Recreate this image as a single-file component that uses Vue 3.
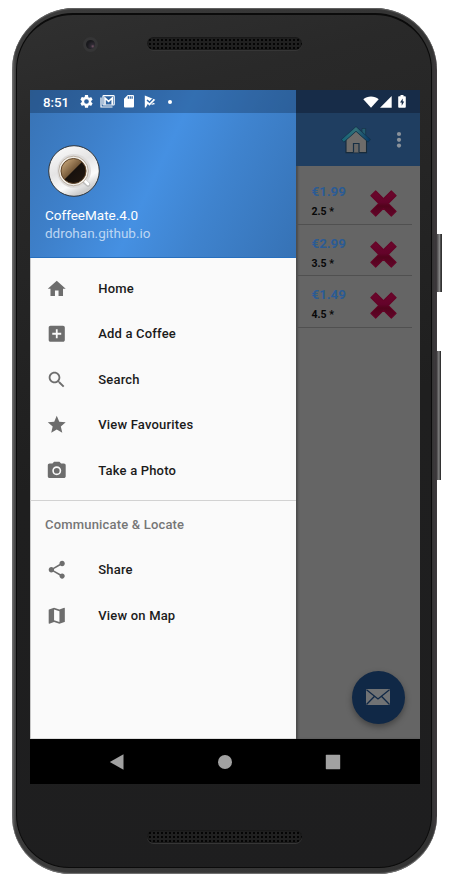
<script setup>
const mainItems = [
  { label: 'Home', path: 'M10 20v-6h4v6h5v-8h3L12 3 2 12h3v8z' },
  { label: 'Add a Coffee', path: 'M19 3H5c-1.11 0-2 .9-2 2v14c0 1.1.89 2 2 2h14c1.1 0 2-.9 2-2V5c0-1.1-.9-2-2-2zm-2 10h-4v4h-2v-4H7v-2h4V7h2v4h4v2z' },
  { label: 'Search', path: 'M15.5 14h-.79l-.28-.27C15.41 12.59 16 11.11 16 9.5 16 5.91 13.09 3 9.5 3S3 5.91 3 9.5 5.91 16 9.5 16c1.61 0 3.09-.59 4.23-1.57l.27.28v.79l5 4.99L20.49 19l-4.99-5zm-6 0C7.01 14 5 11.99 5 9.5S7.01 5 9.5 5 14 7.01 14 9.5 11.99 14 9.5 14z' },
  { label: 'View Favourites', path: 'M12 17.27L18.18 21l-1.64-7.03L22 9.24l-7.19-.61L12 2 9.19 8.63 2 9.24l5.46 4.73L5.82 21z' },
  { label: 'Take a Photo', path: 'M9 2L7.17 4H4c-1.1 0-2 .9-2 2v12c0 1.1.9 2 2 2h16c1.1 0 2-.9 2-2V6c0-1.1-.9-2-2-2h-3.17L15 2H9zm3 15c-2.76 0-5-2.24-5-5s2.24-5 5-5 5 2.24 5 5-2.24 5-5 5zM12 8.8a3.2 3.2 0 1 0 0 6.4 3.2 3.2 0 0 0 0-6.4z' },
]
const shareItems = [
  { label: 'Share', path: 'M18 16.08c-.76 0-1.44.3-1.96.77L8.91 12.7c.05-.23.09-.46.09-.7s-.04-.47-.09-.7l7.05-4.11c.54.5 1.25.81 2.04.81 1.66 0 3-1.34 3-3s-1.34-3-3-3-3 1.34-3 3c0 .24.04.47.09.7L8.04 9.81C7.5 9.31 6.79 9 6 9c-1.66 0-3 1.34-3 3s1.34 3 3 3c.79 0 1.5-.31 2.04-.81l7.12 4.16c-.05.21-.08.43-.08.65 0 1.61 1.31 2.92 2.92 2.92s2.92-1.31 2.92-2.92-1.31-2.92-2.92-2.92z' },
  { label: 'View on Map', path: 'M20.5 3l-.16.03L15 5.1 9 3 3.36 4.9c-.21.07-.36.25-.36.48V20.5c0 .28.22.5.5.5l.16-.03L9 18.9l6 2.1 5.64-1.9c.21-.07.36-.25.36-.48V3.5c0-.28-.22-.5-.5-.5zM15 19l-6-2.11V5l6 2.11V19z' },
]
const coffees = [
  { price: '€1.99', rating: '2.5 *' },
  { price: '€2.99', rating: '3.5 *' },
  { price: '€1.49', rating: '4.5 *' },
]
</script>

<template>
  <div class="stage">
    <div class="phone">
      <i class="key power"></i>
      <i class="key volume"></i>
      <div class="face">
        <div class="bezel top">
          <i class="camera"></i>
          <i class="speaker"></i>
        </div>

        <div class="screen">
          <div class="content">
            <aside class="drawer">
              <header class="profile">
                <div class="status">
                  <span class="time">8:51</span>
                  <svg class="s-gear" viewBox="2 2 20 20"><path d="M19.14 12.94a7 7 0 0 0 0-1.88l2.03-1.58a.5.5 0 0 0 .12-.61l-1.92-3.32a.5.5 0 0 0-.59-.22l-2.39.96a7 7 0 0 0-1.62-.94l-.36-2.54A.5.5 0 0 0 13.93 2h-3.86a.5.5 0 0 0-.47.41l-.36 2.54a7 7 0 0 0-1.62.94l-2.4-.96a.5.5 0 0 0-.58.22L2.74 8.87a.5.5 0 0 0 .12.61l2.03 1.58a7 7 0 0 0 0 1.88l-2.03 1.58a.5.5 0 0 0-.12.61l1.92 3.32c.12.22.37.29.59.22l2.39-.96a7 7 0 0 0 1.62.94l.36 2.54c.05.24.24.41.48.41h3.84c.24 0 .44-.17.47-.41l.36-2.54a7 7 0 0 0 1.62-.94l2.39.96c.22.08.47 0 .59-.22l1.92-3.32a.5.5 0 0 0-.12-.61zM12 15.6a3.6 3.6 0 1 1 0-7.2 3.6 3.6 0 0 1 0 7.2z" /></svg>
                  <svg class="s-mail" viewBox="0 0 15 13"><path d="M1 2.5V12h11.5" fill="none" stroke="#fff" stroke-width="1.2" /><rect x="3" y=".7" width="11.2" height="9.3" rx=".8" fill="none" stroke="#fff" stroke-width="1.2" /><path d="M5 9.8V3l3.6 3.3L12.2 3v6.8" fill="none" stroke="#fff" stroke-width="1.6" /></svg>
                  <svg class="s-sd" viewBox="4 2 16 20"><path d="M18 2h-8L4 8v12c0 1.1.9 2 2 2h12c1.1 0 2-.9 2-2V4c0-1.100-.9-2-2-2zm-6 6h-2V4h2v4zm3 0h-2V4h2v4zm3 0h-2V4h2v4z" /></svg>
                  <svg class="s-play" viewBox="0 0 12 13"><path d="M.8.4 11.300 4.800 5.400 10.700 3.200 8.200 4.300 7.100 5.500 8.300 9.200 4.500 8.200 3.600 5.500 6.300 3.500 4.500 2.500 5.600 4.600 7.500 1.800 12.500.8 12.400z" /><path d="M7 10l2.200-2.200L11.300 9z" /></svg>
                  <i class="s-dot"></i>
                </div>
                <svg class="avatar" viewBox="0 0 52 52">
                  <defs>
                    <linearGradient id="plate" x1="0" y1="0" x2=".5" y2="1"><stop offset="0" stop-color="#fff" /><stop offset=".5" stop-color="#e5e4e4" /><stop offset=".8" stop-color="#fbfbfb" /><stop offset="1" stop-color="#ccc" /></linearGradient>
                    <linearGradient id="coffee" x1=".1" y1=".1" x2=".9" y2=".9"><stop offset="0" stop-color="#c6a579" /><stop offset=".47" stop-color="#765a3a" /><stop offset=".5" stop-color="#17110d" /><stop offset="1" stop-color="#21170f" /></linearGradient>
                  </defs>
                  <circle cx="26" cy="26" r="25.300" fill="url(#plate)" stroke="#2e343a" stroke-width="1" />
                  <circle cx="26" cy="26" r="17" fill="#dedcdb" />
                  <path d="M36 36l4 3.500" stroke="#bbb" stroke-width="4.500" stroke-linecap="round" />
                  <path d="M36 35l4 4" stroke="#fff" stroke-width="2.800" stroke-linecap="round" />
                  <circle cx="25.500" cy="26" r="14.800" fill="#f3efe9" stroke="#a49686" stroke-width=".7" />
                  <circle cx="25.500" cy="26" r="12.500" fill="url(#coffee)" stroke="#5e4327" stroke-width="1" />
                </svg>
                <div class="name">CoffeeMate.4.0</div>
                <div class="site">ddrohan.github.io</div>
              </header>
              <nav class="menu">
                <div v-for="item in mainItems" :key="item.label" class="item">
                  <svg viewBox="0 0 24 24"><path :d="item.path" /></svg>
                  <span>{{ item.label }}</span>
                </div>
              </nav>
              <div class="group">Communicate &amp; Locate</div>
              <nav class="menu">
                <div v-for="item in shareItems" :key="item.label" class="item">
                  <svg viewBox="0 0 24 24"><path :d="item.path" /></svg>
                  <span>{{ item.label }}</span>
                </div>
              </nav>
            </aside>

            <main class="page">
              <div class="page-status">
                <svg class="wifi" viewBox="0 0 16 12"><path d="M.3 3.300C4.500-.5 11.500-.5 15.700 3.300L8 11.800z" /></svg>
                <svg class="signal" viewBox="0 0 12 12"><path d="M0 11.700L11.700 0v11.700z" /></svg>
                <svg class="battery" viewBox="0 0 8 13"><path d="M2.500 0h3v1.300H7q.8 0 .8.8v9.700q0 .9-.8.900H1q-.8 0-.8-.9V2.100q0-.8.8-.8h1.500z" /><path d="M4.700 3.400L2 7.500h1.700v3.200L6.200 6.500H4.700z" fill="#172c48" /></svg>
              </div>
              <div class="toolbar">
                <svg class="house" viewBox="0 0 30 28">
                  <defs><linearGradient id="roof"><stop offset="0" stop-color="#176478" /><stop offset=".5" stop-color="#337078" /><stop offset="1" stop-color="#073967" /></linearGradient></defs>
                  <path d="M21 2.500h3.600v8l-3.600-4z" fill="#245d70" stroke="#173448" stroke-width=".7" />
                  <path d="M5 13L15 4.500 25.500 14v12.600H5z" fill="#6e6c6a" stroke="#172b3b" stroke-width="1.100" />
                  <path d="M12.500 26.500v-9h5.500v9" fill="#686766" stroke="#162e43" stroke-width="1.200" />
                  <path d="M1.500 15L15 3 28.500 15" fill="none" stroke="#123147" stroke-width="4.200" />
                  <path d="M1.800 14.700L15 3l13.200 11.700" fill="none" stroke="url(#roof)" stroke-width="2.900" />
                </svg>
                <svg class="more" viewBox="0 0 6 18"><circle cx="3" cy="3" r="2.100" /><circle cx="3" cy="8.800" r="2.100" /><circle cx="3" cy="14.600" r="2.100" /></svg>
              </div>
              <div class="list">
                <div v-for="coffee in coffees" :key="coffee.price" class="coffee">
                  <div class="info">
                    <div class="price">{{ coffee.price }}</div>
                    <div class="rating">{{ coffee.rating }}</div>
                  </div>
                  <svg class="remove" viewBox="0 0 26 26">
                    <defs><linearGradient id="cross" x2="0" y2="1"><stop offset="0" stop-color="#6b062b" /><stop offset=".45" stop-color="#64032a" /><stop offset=".6" stop-color="#53031c" /><stop offset="1" stop-color="#61052a" /></linearGradient></defs>
                    <path d="M5.500.8L13 8.200 20.500.8 25.200 5.500 17.800 13l7.400 7.500-4.700 4.700L13 17.800l-7.500 7.400-4.700-4.700L8.200 13 .8 5.500z" fill="url(#cross)" stroke="#650427" stroke-width="1" stroke-linejoin="round" />
                  </svg>
                </div>
              </div>
              <div class="fab">
                <svg viewBox="0 0 24 16"><rect width="24" height="16" rx=".8" fill="#707274" /><path d="M.5.800L12 10 23.500.800M.5 15.500L8.300 7.500M23.500 15.500L15.700 7.500" fill="none" stroke="#102846" stroke-width="1.300" /></svg>
              </div>
            </main>
          </div>

          <div class="navbar">
            <svg viewBox="0 0 16 16"><path d="M14.500.2v15.600L.8 8z" /></svg>
            <svg viewBox="0 0 16 16"><circle cx="8" cy="8" r="7" /></svg>
            <svg viewBox="0 0 16 16"><rect x=".8" y=".8" width="14.400" height="14.400" rx=".6" /></svg>
          </div>
        </div>

        <div class="bezel bottom">
          <i class="speaker"></i>
        </div>
      </div>
    </div>
  </div>
</template>

<style>
body {
  background: #fff;
}
</style>

<style scoped>
.stage {
  box-sizing: border-box;
  width: 450px;
  height: 882px;
  padding: 8px 13px 8px 12px;
  overflow: hidden;
  font-family: Roboto, "Liberation Sans", sans-serif;
}
svg {
  display: block;
  flex: none;
}
.phone {
  position: relative;
  box-sizing: border-box;
  height: 866px;
  padding: 5px 5px 6px 4px;
  border-radius: 62px 62px 58px 58px;
  background: linear-gradient(90deg, #777 0, #515151 2px, #3b3b3b 4px, #333 420px, #3d393c 423px, #302d2f 425px);
  box-shadow: inset 0 1px 1px #666, inset 0 -1px 1px #777;
}
.face {
  box-sizing: border-box;
  height: 855px;
  padding: 0 11px 0 13px;
  border: 1px solid #0b0b0b;
  border-top-width: 2px;
  border-radius: 57px 57px 53px 53px;
  background: linear-gradient(165deg, #303030 0, #292929 12%, #1f1f1f 50%, #1e1e1f 100%);
}
.key {
  position: absolute;
  left: 425px;
  background: linear-gradient(90deg, #4a484a 0, #858585 50%, #333 80%);
}
.power {
  top: 226px;
  width: 5px;
  height: 58px;
}
.volume {
  top: 343px;
  width: 4px;
  height: 129px;
}
.bezel {
  display: flex;
}
.top {
  height: 75px;
  box-sizing: border-box;
  padding: 22px 0 0 53px;
}
.camera {
  box-sizing: border-box;
  width: 15px;
  height: 15px;
  border-radius: 50%;
  border: 3px solid #353536;
  background: radial-gradient(circle at 75% 70%, #755564 0, #302b35 20%, #19191d 60%);
}
.speaker {
  width: 155px;
  height: 13px;
  border-radius: 7px;
  background: radial-gradient(circle, #050505 0 .9px, transparent 1.300px) 1px 1px / 4px 4px, #202020;
  box-shadow: inset 0 0 2px #090909, 0 1px 0 #363636;
}
.top .speaker {
  margin-left: 49px;
}
.bottom {
  padding: 46px 0 0 117px;
}
.screen {
  display: flex;
  flex-direction: column;
  width: 390px;
  height: 694px;
}
.content {
  display: flex;
  height: 649px;
}
.drawer {
  box-sizing: border-box;
  width: 266px;
  background: #fafafa;
  box-shadow: inset 1px 0 #c8c8c8, inset 0 -1px #ddd;
}
.profile {
  height: 168px;
  box-sizing: border-box;
  background: linear-gradient(115.500deg, #3873b5 0, #3e80ca 25%, #4590e2 48%, #3f83ce 68%, #3672b5 100%);
  box-shadow: inset 0 -1px #266fbe;
  color: #fff;
}
.status {
  display: flex;
  align-items: center;
  height: 23px;
  box-sizing: border-box;
  padding-left: 13px;
  background: rgba(0, 10, 30, .25);
}
.status svg,
.page-status svg {
  fill: #fff;
}
.time {
  width: 37px;
  font-size: 13.300px;
  font-weight: 500;
  line-height: 23px;
  padding-top: 1px;
}
.s-gear {
  width: 13px;
  height: 13px;
}
.s-mail {
  width: 15px;
  height: 13px;
  margin-left: 7px;
}
.s-sd {
  width: 10px;
  height: 12.500px;
  margin-left: 9px;
}
.s-play {
  width: 12px;
  height: 13px;
  margin-left: 10px;
}
.s-dot {
  width: 4px;
  height: 4px;
  margin-left: 12px;
  border-radius: 50%;
  background: #fff;
}
.avatar {
  width: 52px;
  height: 52px;
  margin: 32px 0 0 18px;
}
.name,
.site {
  padding-left: 15px;
  font-size: 13.500px;
  line-height: 18px;
}
.name {
  margin-top: 9px;
}
.site {
  color: #bcd6f3;
}
.menu {
  padding-top: 7.500px;
}
.item {
  display: flex;
  align-items: center;
  height: 45.500px;
  padding-left: 16px;
  font-size: 13px;
  font-weight: 500;
  letter-spacing: .18px;
  color: #1b1b1b;
}
.item svg {
  width: 21.500px;
  height: 21.500px;
  margin-right: 30.800px;
  fill: #6d6d6d;
}
.group {
  height: 47px;
  box-sizing: border-box;
  margin-top: 6.500px;
  padding-left: 15px;
  border-top: 1px solid #d2d2d2;
  font-size: 13px;
  font-weight: 500;
  letter-spacing: .18px;
  line-height: 47px;
  color: #767676;
}
.group + .menu {
  padding-top: .5px;
}
.page {
  position: relative;
  width: 124px;
  background: #656565;
  box-shadow: inset 2px 0 2px rgba(0, 0, 0, .25);
}
.page-status {
  display: flex;
  align-items: center;
  height: 23px;
  padding-left: 67px;
  background: #172c48;
}
.wifi {
  width: 16px;
  height: 12px;
}
.signal {
  width: 12px;
  height: 12px;
  margin-left: 1px;
}
.battery {
  width: 8px;
  height: 13px;
  margin-left: 6px;
}
.toolbar {
  display: flex;
  align-items: center;
  height: 53px;
  padding-left: 45px;
  background: #1f3e61;
}
.house {
  width: 30px;
  height: 28px;
}
.more {
  width: 6px;
  height: 18px;
  margin-left: 25px;
  fill: #8a929b;
}
.list {
  padding: 7.500px 8px 0 0;
}
.coffee {
  display: flex;
  align-items: center;
  box-sizing: border-box;
  height: 51.400px;
  padding: 0 15px 0 15.500px;
  justify-content: space-between;
  border-bottom: 1px solid #505050;
}
.price {
  margin-top: 6px;
  font-size: 13.300px;
  font-weight: 700;
  line-height: 21px;
  color: #2b5b94;
}
.rating {
  font-size: 10.500px;
  font-weight: 700;
  line-height: 20px;
  color: #080808;
}
.remove {
  width: 27px;
  height: 27px;
  margin-top: 9px;
}
.fab {
  position: absolute;
  right: 15.500px;
  bottom: 15.500px;
  display: flex;
  align-items: center;
  justify-content: center;
  width: 53px;
  height: 53px;
  border-radius: 50%;
  background: #102846;
  box-shadow: 0 3px 6px rgba(0, 0, 0, .35);
}
.fab svg {
  width: 24px;
  height: 16px;
}
.navbar {
  display: flex;
  align-items: center;
  justify-content: space-between;
  height: 45px;
  box-sizing: border-box;
  padding: 0 79.500px 0 78.500px;
  background: #000;
}
.navbar svg {
  width: 16px;
  height: 16px;
  fill: #a1a1a1;
}
</style>
